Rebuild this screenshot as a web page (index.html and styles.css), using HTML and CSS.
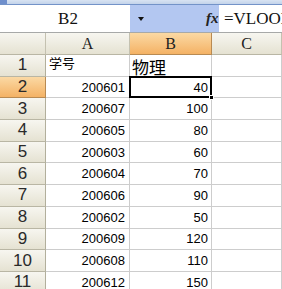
FILE: index.html
```html
<!DOCTYPE html>
<html>
<head>
<meta charset="utf-8">
<link rel="stylesheet" href="styles.css">
</head>
<body>
<div class="app">
  <div class="topband"><span class="corner-mark"></span></div>
  <div class="fbar">
    <div class="namebox">B2</div>
    <div class="drop"><span class="arrow"></span></div>
    <div class="fx">fx</div>
    <div class="formula">=VLOOKUP(A2,Sheet2!A:B,2,0)</div>
  </div>
  <div class="sheet">
    <div class="ch corner"></div>
    <div class="ch">A</div>
    <div class="ch sel">B</div>
    <div class="ch">C</div>

    <div class="rh">1</div><div class="c txt small">学号</div><div class="c txt big">物理</div><div class="c"></div>
    <div class="rh sel">2</div><div class="c n">200601</div><div class="c n nb active">40</div><div class="c"></div>
    <div class="rh">3</div><div class="c n">200607</div><div class="c n nb">100</div><div class="c"></div>
    <div class="rh">4</div><div class="c n">200605</div><div class="c n nb">80</div><div class="c"></div>
    <div class="rh">5</div><div class="c n">200603</div><div class="c n nb">60</div><div class="c"></div>
    <div class="rh">6</div><div class="c n">200604</div><div class="c n nb">70</div><div class="c"></div>
    <div class="rh">7</div><div class="c n">200606</div><div class="c n nb">90</div><div class="c"></div>
    <div class="rh">8</div><div class="c n">200602</div><div class="c n nb">50</div><div class="c"></div>
    <div class="rh">9</div><div class="c n">200609</div><div class="c n nb">120</div><div class="c"></div>
    <div class="rh">10</div><div class="c n">200608</div><div class="c n nb">110</div><div class="c"></div>
    <div class="rh">11</div><div class="c n">200612</div><div class="c n nb">150</div><div class="c"></div>
  </div>
</div>
</body>
</html>
```
FILE: styles.css
```css
html, body {
  margin: 0;
  padding: 0;
  background: #fff;
}
.app {
  width: 282px;
  height: 289px;
  overflow: hidden;
}
.topband {
  height: 4px;
  background: linear-gradient(#d8e3f2, #c3d3ea);
  border-bottom: 1px solid #7393c8;
  display: flex;
}
.corner-mark {
  width: 7px;
  background: #6f8fcc;
}
.fbar {
  display: flex;
  height: 27px;
  border-bottom: 1px solid #a7a9a8;
}
.namebox {
  width: 130px;
  background: #fff;
  display: flex;
  align-items: center;
  justify-content: center;
  padding-left: 6px;
  box-sizing: border-box;
  font: 17px "Liberation Serif", serif;
  color: #111;
}
.drop {
  width: 76px;
  background: #b3c7f1;
  display: flex;
  align-items: center;
  padding-left: 8px;
  box-sizing: border-box;
}
.arrow {
  width: 0;
  height: 0;
  border-left: 3px solid transparent;
  border-right: 3px solid transparent;
  border-top: 4px solid #111;
}
.fx {
  width: 13px;
  background: #b3c7f1;
  font: italic bold 15px "Liberation Serif", serif;
  color: #222;
  display: flex;
  align-items: center;
}
.formula {
  flex: 1;
  background: #fff;
  font: 17px "Liberation Serif", serif;
  color: #111;
  white-space: nowrap;
  overflow: hidden;
  display: flex;
  align-items: center;
  padding-left: 5px;
}
.sheet {
  display: grid;
  grid-template-columns: 46px 84px 82px 1fr;
  grid-template-rows: 22px;
  grid-auto-rows: 21.7px;
}
.ch, .rh {
  background: linear-gradient(#f7f6f0, #e5e2d2);
  border-right: 1px solid #c4c1b0;
  border-bottom: 1px solid #b9b6a4;
  box-sizing: border-box;
  display: flex;
  align-items: center;
  justify-content: center;
  color: #222;
}
.ch {
  font: 16px "Liberation Serif", serif;
}
.rh {
  font: 17px "Liberation Sans", sans-serif;
  color: #2a2a2a;
  border-right-color: #b2af9c;
}
.ch.sel, .rh.sel {
  background: linear-gradient(#fbd9a4, #f4b265);
  border-right-color: #b88a52;
  border-bottom-color: #b88a52;
}
.c {
  border-right: 1px solid #cdcdcd;
  border-bottom: 1px solid #cdcdcd;
  box-sizing: border-box;
  display: flex;
  align-items: center;
  font: 13px "Liberation Sans", sans-serif;
  color: #000;
  position: relative;
}
.c.n {
  justify-content: flex-end;
  padding-right: 4px;
}
.c.nb {
  padding-right: 3px;
}
.c.txt {
  font-family: "Noto Sans CJK SC", sans-serif;
  padding-left: 3px;
  align-items: flex-end;
}
.c.small {
  font-size: 13px;
  padding-bottom: 4px;
}
.c.big {
  font-size: 17px;
  line-height: 19px;
  padding-left: 2px;
}
.c.active::after {
  content: "";
  position: absolute;
  left: -1px;
  top: -1px;
  right: -1px;
  bottom: -1px;
  border: 2px solid #000;
}
.c.active::before {
  content: "";
  position: absolute;
  right: -3px;
  bottom: -3px;
  width: 5px;
  height: 5px;
  background: #000;
  border: 1px solid #fff;
  box-sizing: border-box;
  z-index: 1;
}
```
